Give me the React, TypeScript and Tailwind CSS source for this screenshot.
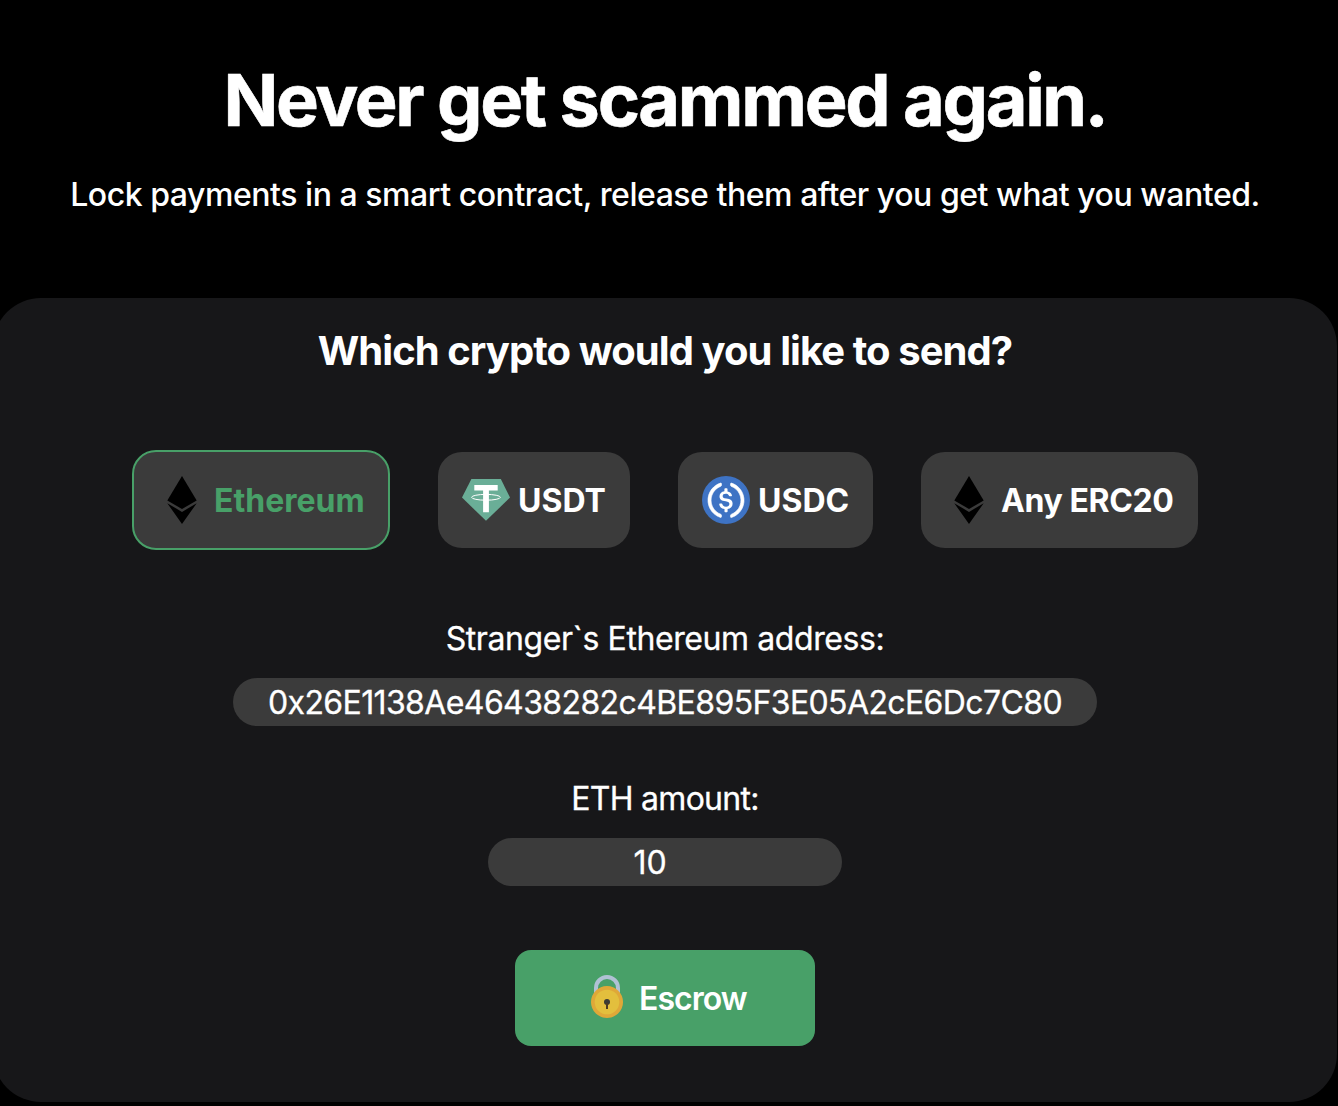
import { useState } from 'react'
import type { ReactNode } from 'react'
import clsx from 'clsx'

type Crypto = {
  id: string
  label: string
  icon: ReactNode
  className: string
}

function EthereumIcon() {
  return (
    <svg viewBox="0 0 48 48" className="h-12 w-12 shrink-0">
      <path d="M24 0L38.7 24.4L24 33.1L9.3 24.4Z" />
      <path d="M9.3 27.2L24 35.9L38.7 27.2L24 48Z" />
    </svg>
  )
}

function TetherIcon() {
  return (
    <svg viewBox="0 0 48 48" className="h-12 w-12 shrink-0">
      <path d="M9.4 3H38.8L48 21.6L24 44.8L0 21.6Z" fill="#6aae97" />
      <path d="M12.3 9H35.7V14.6H26.9V36.2H21.1V14.6H12.3Z" fill="#fff" />
      <ellipse cx="24" cy="21.3" rx="14.4" ry="2.9" fill="none" stroke="#fff" strokeWidth="1" />
    </svg>
  )
}

function UsdcIcon() {
  return (
    <svg viewBox="0 0 2000 2000" className="h-12 w-12 shrink-0">
      <circle cx="1000" cy="1000" r="1000" fill="#3e73c4" />
      <path
        fill="#fff"
        d="M1275 1158.33c0-145.83-87.5-195.83-262.5-216.66-125-16.67-150-50-150-108.34s41.67-95.83 125-95.83c75 0 116.67 25 137.5 87.5 4.17 12.5 16.67 20.83 29.17 20.83h66.66c16.67 0 29.17-12.5 29.17-29.16v-4.17c-16.67-91.67-91.67-162.5-187.5-170.83v-100c0-16.67-12.5-29.17-33.33-33.34h-62.5c-16.67 0-29.17 12.5-33.34 33.34v95.83c-125 16.67-204.16 100-204.16 204.17 0 137.5 83.33 191.66 258.33 212.5 116.67 20.83 154.17 45.83 154.17 112.5s-58.34 112.5-137.5 112.5c-108.34 0-145.84-45.84-158.34-108.34-4.16-16.66-16.66-25-29.16-25h-70.84c-16.66 0-29.16 12.5-29.16 29.17v4.17c16.66 104.16 83.33 179.16 220.83 200v100c0 16.66 12.5 29.16 33.33 33.33h62.5c16.67 0 29.17-12.5 33.34-33.33v-100c125-20.84 208.33-108.34 208.33-220.84z"
      />
      <path
        fill="#fff"
        stroke="#fff"
        strokeWidth="25"
        d="M787.5 1595.83c-325-116.66-491.67-479.16-370.83-800 62.5-175 200-308.33 370.83-370.83 16.67-8.33 25-20.83 25-41.67V325c0-16.67-8.33-29.17-25-33.33-4.17 0-12.5 0-16.67 4.16-395.83 125-612.5 545.84-487.5 941.67 75 233.33 254.17 412.5 487.5 487.5 16.67 8.33 33.34 0 37.5-16.67 4.17-4.16 4.17-8.33 4.17-16.66v-58.34c0-12.5-12.5-29.16-25-37.5zM1229.17 295.83c-16.67-8.33-33.34 0-37.5 16.67-4.17 4.17-4.17 8.33-4.17 16.67v58.33c0 16.67 12.5 33.33 25 41.67 325 116.66 491.67 479.16 370.83 800-62.5 175-200 308.33-370.83 370.83-16.67 8.33-25 20.83-25 41.67V1700c0 16.67 8.33 29.17 25 33.33 4.17 0 12.5 0 16.67-4.16 395.83-125 612.5-545.84 487.5-941.67-75-237.5-258.34-416.67-487.5-491.67z"
      />
    </svg>
  )
}

function LockIcon() {
  return (
    <svg viewBox="0 0 32 43" className="mb-[3px] h-[43px] w-8 shrink-0">
      <path d="M5 18V13A11 11 0 0 1 27 13V18" fill="none" stroke="#b0c1d4" strokeWidth="4" />
      <circle cx="16" cy="27" r="16" fill="#dfa838" />
      <circle cx="16" cy="27" r="12.3" fill="#e3bf3d" />
      <circle cx="16" cy="27" r="3" fill="#3b3b35" />
      <path d="M15 28H17V34H15Z" fill="#4d3a22" />
    </svg>
  )
}

const cryptos: Crypto[] = [
  { id: 'eth', label: 'Ethereum', icon: <EthereumIcon />, className: 'w-[258px]' },
  { id: 'usdt', label: 'USDT', icon: <TetherIcon />, className: 'w-[192px]' },
  { id: 'usdc', label: 'USDC', icon: <UsdcIcon />, className: 'w-[195px]' },
  { id: 'erc20', label: 'Any ERC20', icon: <EthereumIcon />, className: 'w-[277px] tracking-[-0.4px]' },
]

export default function App() {
  const [selected, setSelected] = useState('eth')

  return (
    <div className="h-[1106px] overflow-hidden bg-black font-['Inter',sans-serif] text-white">
      <main className="-ml-[7px] w-[1344px] text-center">
        <header className="h-[298px] pt-14">
          <h1 className="text-[72px] leading-[88px] font-bold tracking-[-2.32px] [-webkit-text-stroke:0.6px_white]">
            Never get scammed again.
          </h1>
          <p className="mt-[31px] text-[32px] leading-10 font-medium tracking-[-0.46px]">
            Lock payments in a smart contract, release them after you get what you wanted.
          </p>
        </header>

        <section className="flex h-[804px] flex-col items-center rounded-[48px] bg-[#171719] pt-7">
          <h2 className="text-[40px] leading-[50px] font-bold tracking-[-0.93px]">Which crypto would you like to send?</h2>

          <div className="mt-[74px] flex h-[100px] items-center gap-12">
            {cryptos.map((crypto) => (
              <button
                key={crypto.id}
                type="button"
                onClick={() => setSelected(crypto.id)}
                className={clsx(
                  'flex items-center gap-2 rounded-3xl bg-[#3b3b3b] px-6 text-[32px] font-bold whitespace-nowrap',
                  crypto.className,
                  selected === crypto.id ? 'h-[100px] border-2 border-[#48a068] text-[#48a068]' : 'h-24',
                )}
              >
                {crypto.icon}
                <span className="pt-0.5">{crypto.label}</span>
              </button>
            ))}
          </div>

          <label
            htmlFor="address"
            className="mt-[69px] text-[32px] leading-10 tracking-[-0.41px] [-webkit-text-stroke:0.3px_white]"
          >
            Stranger`s Ethereum address:
          </label>
          <input
            id="address"
            defaultValue="0x26E1138Ae46438282c4BE895F3E05A2cE6Dc7C80"
            className="mt-[19px] h-12 w-[864px] rounded-full bg-[#3b3b3b] pt-0.5 text-center text-[32px] tracking-[-0.61px] outline-none [-webkit-text-stroke:0.3px_white]"
          />

          <label
            htmlFor="amount"
            className="mt-[53px] text-[32px] leading-10 tracking-[-0.7px] [-webkit-text-stroke:0.3px_white]"
          >
            ETH amount:
          </label>
          <input
            id="amount"
            inputMode="decimal"
            defaultValue="10"
            className="mt-[19px] h-12 w-[354px] rounded-full bg-[#3b3b3b] pt-0.5 pr-[30px] text-center text-[32px] outline-none [-webkit-text-stroke:0.3px_white]"
          />

          <button
            type="button"
            className="mt-16 flex h-24 w-[300px] items-center gap-4 rounded-2xl bg-[#48a068] pl-[76px] text-[32px] font-semibold tracking-[-0.95px]"
          >
            <LockIcon />
            <span className="pt-0.5">Escrow</span>
          </button>
        </section>
      </main>
    </div>
  )
}
